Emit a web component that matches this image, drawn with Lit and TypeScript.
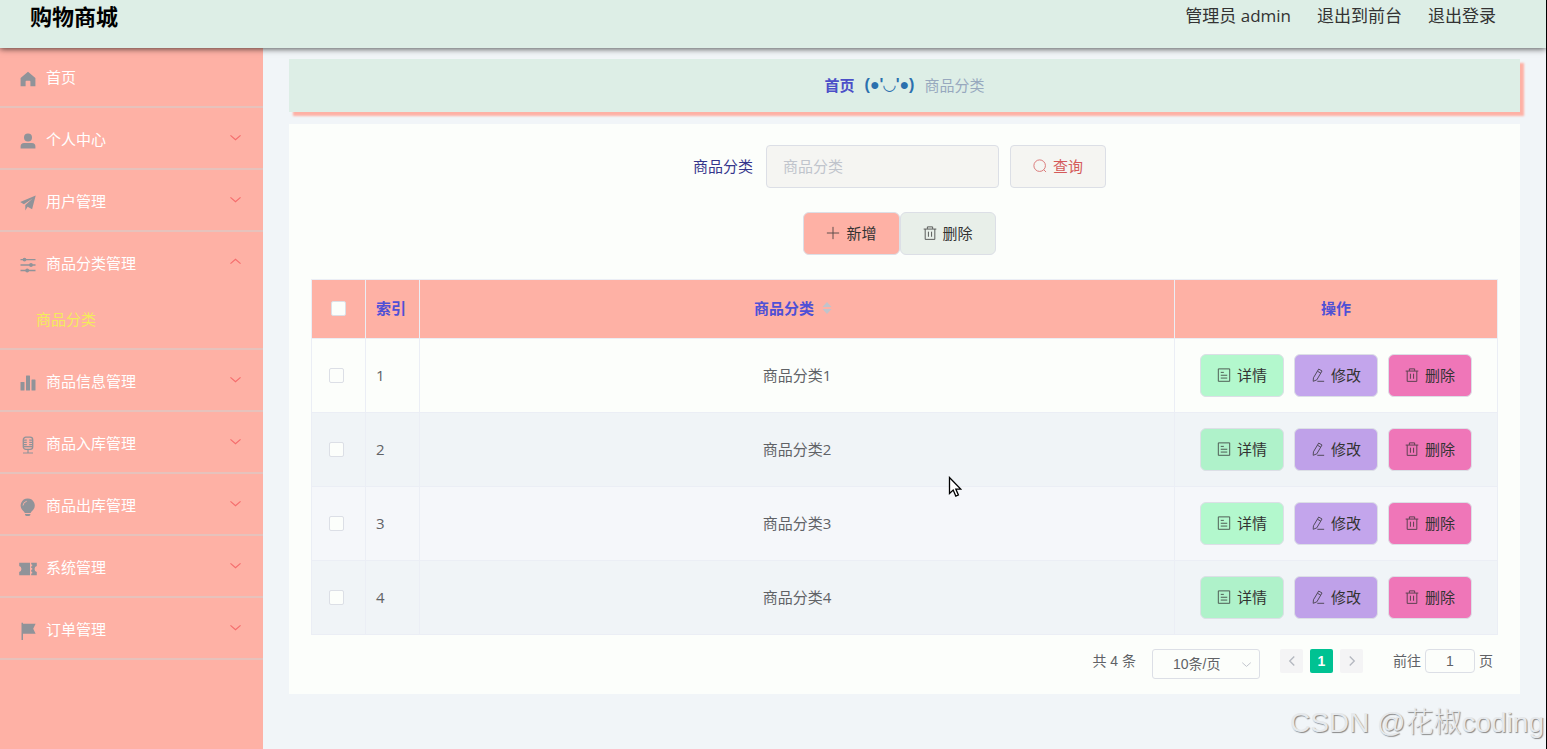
import { LitElement, css, html, svg, nothing, TemplateResult } from "lit";
import { customElement, property, state } from "lit/decorators.js";

const glyphs: Record<string, TemplateResult> = {
  home: svg`<path fill="currentColor" d="M8 .8 15.4 7v8.2h-5V10.500a.8.8 0 0 0-.8-.8H6.400a.8.8 0 0 0-.8.8v4.700h-5V7z"/>`,
  user: svg`<g fill="currentColor"><circle cx="8" cy="4.400" r="4"/><path d="M.6 15.600V13.500A3.500 3.500 0 0 1 4.100 10h7.800a3.500 3.500 0 0 1 3.500 3.500v2.100z"/></g>`,
  plane: svg`<path fill="currentColor" d="M15.700.6.200 7l3.700 2.300L12.600 3.400 5.300 10v5.500l2.300-3.700 4.500 2.400z"/>`,
  sliders: svg`<g fill="none" stroke="currentColor" stroke-width="1.300"><path d="M.5 2.600h15M.5 8h15M.5 13.500h15"/></g><g fill="currentColor"><circle cx="4.500" cy="2.600" r="1.900"/><circle cx="11" cy="8" r="1.900"/><circle cx="7.200" cy="13.500" r="1.900"/></g>`,
  bars: svg`<g fill="currentColor"><rect x=".5" y="7" width="4" height="8.500" rx=".6"/><rect x="6" y=".5" width="4" height="15" rx=".6"/><rect x="11.500" y="4.500" width="4" height="11" rx=".6"/></g>`,
  mic: svg`<g fill="none" stroke="currentColor"><rect x="3.300" y=".2" width="9.400" height="12.200" rx="2.600" stroke-width="1.300"/><path stroke-width="1.200" d="M4 3.200h2.800M4 5.400h2.800M4 7.600h2.800M9.200 3.200H12M9.200 5.400H12M9.200 7.600H12M4 9.700h8M8 12.500v3.200M3 16h10"/></g>`,
  bulb: svg`<path fill="currentColor" d="M7.700-.6a7 7 0 0 0-4.900 12q1.500 1.200 2 2.700h5.800q.5-1.500 2-2.700a7 7 0 0 0-4.900-12M5 15h5.400v.6q0 1.400-1.400 1.400H6.400Q5 17 5 15.600z"/><path fill="none" stroke="#feb1a5" stroke-width=".9" d="M3 6.500q.3-3.500 3.800-4.300"/>`,
  ticket: svg`<path fill="currentColor" d="M-.8 1.800H10V14.200H-.8V10.900A3 3 0 0 0-.8 5.100zM11.200 1.800h5.600v3.300a3 3 0 0 0 0 5.800v3.300h-5.600v-1.700h1v-1.800h-1V8.800h1V7h-1V5.300h1V3.500h-1z"/>`,
  flag: svg`<path fill="currentColor" d="M1.500-.2H3V.8H15.600L13.200 5.800l2.400 5H3V17H1.500z"/>`,
  down: svg`<path fill="none" stroke="currentColor" stroke-width="1.400" d="m1.800 5.300 6.200 5.500 6.200-5.500"/>`,
  up: svg`<path fill="none" stroke="currentColor" stroke-width="1.400" d="m1.800 10.700 6.200-5.500 6.200 5.500"/>`,
  left: svg`<path fill="none" stroke="currentColor" stroke-width="1.800" d="m11 2-6 6 6 6"/>`,
  right: svg`<path fill="none" stroke="currentColor" stroke-width="1.800" d="m5 2 6 6-6 6"/>`,
  search: svg`<g fill="none" stroke="currentColor" stroke-width="1.100"><circle cx="7.600" cy="7.600" r="6.600"/><path d="m12.200 12.200 2.700 2.700"/></g>`,
  plus: svg`<path fill="none" stroke="currentColor" stroke-width="1.100" d="M8 1v14M1 8h14"/>`,
  trash: svg`<path fill="none" stroke="currentColor" stroke-width="1.100" d="M.8 3.500h14.400M5 3.300V1h6v2.300M2.500 3.500v11.800h11V3.500M6.200 6.500v5.800M9.800 6.500v5.800"/>`,
  doc: svg`<path fill="none" stroke="currentColor" stroke-width="1.100" d="M1.500 1h13v14.200h-13zM4.300 5h3.500M4.300 8.300h7.400M4.300 11.500h7.400"/>`,
  edit: svg`<path fill="none" stroke="currentColor" stroke-width="1.100" d="m8.800 1.200 3.800 2.200-6 10.200-4.100 1.600.3-4zM7.400 3.700l3.800 2.200M7.200 15.200H15"/>`,
};

const icon = (name: string) =>
  html`<svg class="icon" viewBox="0 0 16 16" aria-hidden="true">${glyphs[name]}</svg>`;

interface MenuEntry {
  icon: string;
  label: string;
  children?: string[];
}

const menu: MenuEntry[] = [
  { icon: "home", label: "首页" },
  { icon: "user", label: "个人中心", children: ["个人信息"] },
  { icon: "plane", label: "用户管理", children: ["用户"] },
  { icon: "sliders", label: "商品分类管理", children: ["商品分类"] },
  { icon: "bars", label: "商品信息管理", children: ["商品信息"] },
  { icon: "mic", label: "商品入库管理", children: ["商品入库"] },
  { icon: "bulb", label: "商品出库管理", children: ["商品出库"] },
  { icon: "ticket", label: "系统管理", children: ["轮播图管理"] },
  { icon: "flag", label: "订单管理", children: ["订单"] },
];

const shared = css`
  * { box-sizing: border-box; }
  button, input, select { font: inherit; color: inherit; margin: 0; }
  button { cursor: pointer; }
  a { color: inherit; text-decoration: none; }
  .icon { display: block; width: 14px; height: 14px; flex: none; overflow: visible; }
`;

@customElement("side-menu")
export class SideMenu extends LitElement {
  @state() private open = "商品分类管理";

  static styles = [shared, css`
    :host { display: block; background: #feb1a5; color: #fff; }
    ul { list-style: none; margin: 0; padding: 0; }
    .group { border-bottom: 2px solid #e6c2bc; }
    .title {
      display: flex; align-items: center; gap: 10px;
      width: 100%; height: 60px; padding: 2px 21px 0 20px;
      border: 0; background: none; text-align: left;
    }
    .title > .icon:first-child { width: 16px; height: 16px; color: #909399; margin-top: 4px; }
    .label { flex: 1; }
    .arrow { color: #f56c6c; margin-bottom: 4px; }
    .arrow .icon { width: 13px; height: 13px; }
    .child { display: block; padding: 0 36px 2px; line-height: 54px; color: #f3ec5b; }
  `];

  render() {
    return html`<nav><ul>${menu.map((m) => html`
      <li class="group">
        <button class="title" @click=${() => (this.open = m.label)}>
          ${icon(m.icon)}<span class="label">${m.label}</span>
          ${m.children ? html`<span class="arrow">${icon(this.open === m.label ? "up" : "down")}</span>` : nothing}
        </button>
        ${this.open === m.label ? m.children?.map((c) => html`<a class="child" href="#">${c}</a>`) : nothing}
      </li>`)}</ul></nav>`;
  }
}

@customElement("category-table")
export class CategoryTable extends LitElement {
  @property({ attribute: false }) rows: string[] = [];

  static styles = [shared, css`
    :host { display: block; }
    table {
      width: 100%; table-layout: fixed; border-spacing: 0;
      border: 1px solid #ebeef5; border-right: 0; border-bottom: 0; color: #606266;
    }
    .pick, .index { width: 54px; }
    .actions { width: 323px; }
    th, td { border: 0 solid #ebeef5; border-width: 0 1px 1px 0; padding: 0 11px 2px; text-align: center; }
    th { height: 59px; background: #feb1a5; color: #4f50d6; font-weight: 700; }
    td { height: 74px; }
    th.index, td.index { text-align: left; padding-left: 10px; padding-right: 0; }
    td.pick { padding: 0 15px 0 11px; }
    td.tools { padding-bottom: 0; }
    tbody tr:nth-child(even) { background: #f0f4f7; }
    tbody tr:nth-child(3) { background: #f5f7fa; }
    .check {
      appearance: none; display: block; width: 15px; height: 15px; margin: 0 auto;
      border: 1px solid #dcdfe6; border-radius: 2px; background: #fcfefb;
    }
    .check:checked { background: #00c292; }
    .sort { display: inline-flex; align-items: center; gap: 8px; padding: 0; border: 0; background: none; }
    .sort svg { display: block; width: 10px; height: 12px; margin-right: 8px; }
    .ops { display: flex; justify-content: center; gap: 10px; }
    .op {
      display: flex; align-items: center; gap: 6px; height: 43px; padding: 0 16px 2px;
      border: 1px solid #dcdfe6; border-radius: 6px; color: #333;
    }
    .op .icon { opacity: 0.8; }
    .detail { background: #b3f8cd; }
    .edit { background: #c3a5ec; }
    .remove { background: #ef76b8; }
    tr:nth-child(even) .detail { background: #aff2ca; }
    tr:nth-child(even) .edit { background: #bfa1e9; }
  `];

  render() {
    return html`<table>
      <thead><tr>
        <th class="pick"><input class="check" type="checkbox" aria-label="全选"></th>
        <th class="index">索引</th>
        <th><button class="sort">商品分类<svg viewBox="0 0 10 12" aria-hidden="true"><path fill="#c0c4cc" d="M5 0 9.500 5H.5zM5 12 .5 7h9z"/></svg></button></th>
        <th class="actions">操作</th>
      </tr></thead>
      <tbody>${this.rows.map((name, i) => html`<tr>
        <td class="pick"><input class="check" type="checkbox" aria-label=${name}></td>
        <td class="index">${i + 1}</td>
        <td>${name}</td>
        <td class="tools"><div class="ops">
          <button class="op detail">${icon("doc")}详情</button>
          <button class="op edit">${icon("edit")}修改</button>
          <button class="op remove">${icon("trash")}删除</button>
        </div></td>
      </tr>`)}</tbody>
    </table>`;
  }
}

@customElement("app-root")
export class AppRoot extends LitElement {
  static styles = [shared, css`
    :host {
      display: flex; flex-direction: column; position: relative; overflow: hidden;
      min-height: 100vh; box-sizing: border-box;
      border-right: 1px solid #000; background: #f1f5f8;
      font: 15px/20px "Open Sans", "Noto Sans CJK SC", sans-serif;
    }
    .top {
      position: relative; z-index: 1; display: flex; justify-content: space-between;
      height: 48px; padding: 0 50px 0 30px; line-height: 32px;
      background: #ddeee6; box-shadow: 0 1px 6px #000a;
    }
    .brand { margin: 0; font-size: 22px; line-height: 32px; font-weight: 700; color: #000; }
    .account { display: flex; gap: 26px; font-size: 17px; color: #333; }
    .body { flex: 1; display: flex; }
    side-menu { width: 263px; flex: none; margin-top: -2px; }
    main { flex: 1; min-width: 0; padding: 11px 26px; }
    .crumbs {
      display: flex; justify-content: center; align-items: center; gap: 10px;
      height: 53px; padding-bottom: 2px; margin-bottom: 12px; background: #ddeee6; box-shadow: 4px 4px 2px #feb1a5;
    }
    .crumbs a { font-weight: 700; color: #4b4fc8; }
    .face { font-family: "Liberation Sans", "DejaVu Sans", sans-serif; font-size: 16px; font-weight: 700; color: #2b70ae; }
    .current { color: #97a8be; }
    .panel { padding: 21px 22px 15px; background: #fcfefb; }
    .row { display: flex; justify-content: center; align-items: center; margin: 0 10px 24px 0; }
    .row label { color: #35358c; padding-bottom: 2px; margin-right: 13px; }
    .row input {
      width: 233px; height: 43px; padding: 0 16px 2px; margin-right: 11px;
      border: 1px solid #dcdfe6; border-radius: 4px; background: #f5f5f2;
    }
    .row input::placeholder { color: #c0c4cc; opacity: 1; }
    .btn {
      display: flex; align-items: center; gap: 6px; height: 43px; padding: 0 22px 2px;
      border: 1px solid #dcdfe6; border-radius: 6px; color: #333;
    }
    .btn .icon { opacity: 0.8; }
    .query { background: #f5f5f2; color: #d45a5a; border-radius: 4px; }
    .add { background: #feb1a5; }
    .del { background: #e8efe9; }
    .pager {
      display: flex; justify-content: flex-end; padding: 14px 5px 0 0;
      font: 14px/24px "Liberation Sans", "Noto Sans CJK SC", sans-serif; color: #606266;
    }
    .size { display: grid; align-items: center; width: 108px; margin: 0 20px 0 16px; }
    .size select {
      grid-area: 1 / 1; appearance: none; height: 30px; padding: 0 20px;
      border: 1px solid #dcdfe6; border-radius: 3px; background: none;
    }
    .size .icon { grid-area: 1 / 1; justify-self: end; width: 11px; height: 11px; margin-right: 8px; color: #c0c4cc; pointer-events: none; }
    .pages { display: flex; gap: 7px; margin-right: 30px; }
    .pages button {
      display: grid; place-items: center; width: 23px; height: 24px; padding: 0;
      border: 0; border-radius: 2px; background: #f4f4f5; color: #b4b8c0;
    }
    .pages .icon { width: 12px; height: 12px; }
    .pages .on { background: #00c292; color: #fff; font-weight: 700; }
    .jump { display: flex; gap: 4px; }
    .jump input {
      width: 50px; height: 24px; padding: 0; text-align: center;
      border: 1px solid #dcdfe6; border-radius: 4px; background: #fcfefb;
    }
    .mark {
      position: absolute; right: 2px; bottom: 6px; font: 300 28px/40px "Liberation Sans", "Noto Sans CJK SC", sans-serif;
      color: #e6e9ec; text-shadow: 1px 1px 1px #888; white-space: nowrap; pointer-events: none;
    }
    .pointer { position: absolute; left: 948px; top: 476px; width: 14px; height: 22px; pointer-events: none; }
  `];

  render() {
    return html`
      <header class="top">
        <h1 class="brand">购物商城</h1>
        <div class="account"><span>管理员 admin</span><a href="#">退出到前台</a><a href="#">退出登录</a></div>
      </header>
      <div class="body">
        <side-menu></side-menu>
        <main>
          <nav class="crumbs"><a href="#">首页</a><span class="face">(●'◡'●)</span><span class="current">商品分类</span></nav>
          <section class="panel">
            <form class="row" @submit=${(e: Event) => e.preventDefault()}>
              <label for="name">商品分类</label>
              <input id="name" placeholder="商品分类">
              <button class="btn query">${icon("search")}查询</button>
            </form>
            <div class="row">
              <button class="btn add">${icon("plus")}新增</button>
              <button class="btn del">${icon("trash")}删除</button>
            </div>
            <category-table .rows=${["商品分类1", "商品分类2", "商品分类3", "商品分类4"]}></category-table>
            <div class="pager">
              <span>共 4 条</span>
              <div class="size"><select aria-label="每页条数"><option>10条/页</option></select>${icon("down")}</div>
              <div class="pages">
                <button aria-label="上一页">${icon("left")}</button>
                <button class="on">1</button>
                <button aria-label="下一页">${icon("right")}</button>
              </div>
              <div class="jump"><label for="page">前往</label><input id="page" value="1"><span>页</span></div>
            </div>
          </section>
        </main>
      </div>
      <div class="mark">CSDN @花椒coding</div>
      <svg class="pointer" viewBox="0 0 14 22" aria-hidden="true"><path fill="#fff" stroke="#000" stroke-width="1.300" d="M1.500 1.500v16l3.700-3.400 2.600 6 2.600-1.100-2.600-5.900h4.900z"/></svg>`;
  }
}
